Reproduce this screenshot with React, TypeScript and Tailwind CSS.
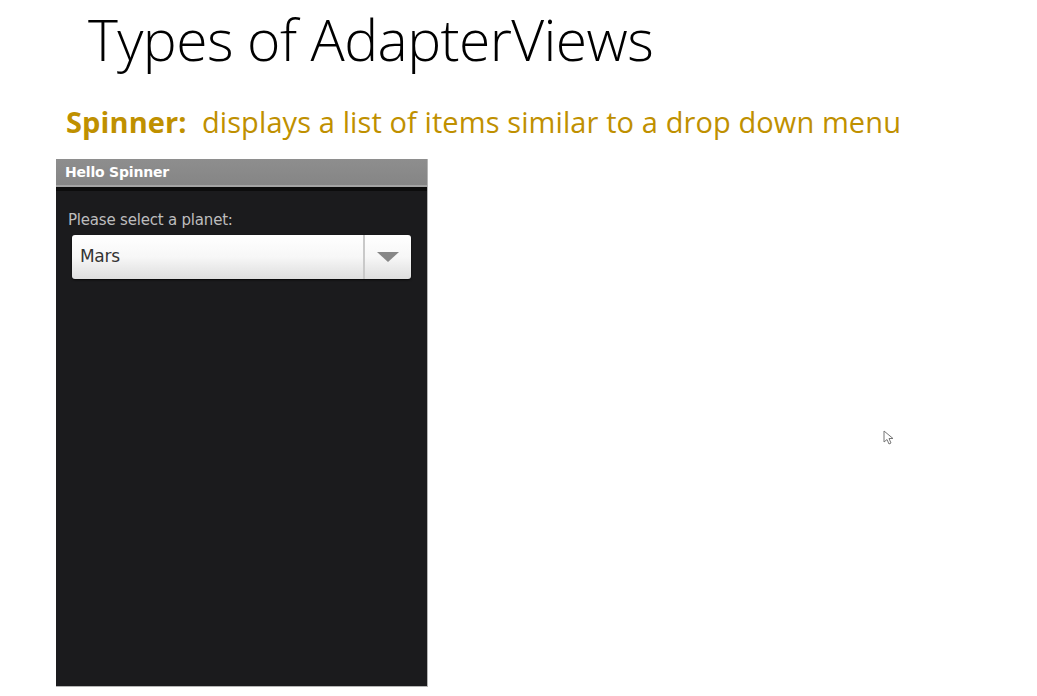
import React from 'react';

const Spinner: React.FC = () => (
  <div className="w-[372px] h-[528px] bg-[#1b1b1d] border-r border-b border-[#b5b5b5] flex flex-col">
    <div className="h-[28px] bg-gradient-to-b from-[#8e8e8e] to-[#858585] border-b-2 border-[#a3a3a3] flex items-center px-[9px]">
      <span className="text-white text-[14px] font-bold tracking-[-0.2px]" style={{ fontFamily: '"DejaVu Sans", sans-serif' }}>
        Hello Spinner
      </span>
    </div>
    <div className="h-[4px] bg-[#0c0c0c]" />
    <div className="px-[12px] pt-[21px]" style={{ fontFamily: '"DejaVu Sans", sans-serif' }}>
      <p className="text-[#bdbdbd] text-[15px] leading-[16px] tracking-[-0.2px]">Please select a planet:</p>
      <div className="mt-[7px] mx-[4px] h-[44px] rounded-[3px] bg-gradient-to-b from-[#ffffff] via-[#f7f7f7] to-[#dedede] flex shadow-[0_1px_2px_rgba(0,0,0,0.8)]">
        <div className="flex-1 flex items-center pl-[8px] border-r-2 border-[#c9c9c9]">
          <span className="text-[#333333] text-[17px] tracking-[-0.3px]">Mars</span>
        </div>
        <div className="w-[46px] flex items-center justify-center">
          <svg width="24" height="12" viewBox="0 0 24 12">
            <path d="M1 1 L23 1 L12 11 Z" fill="#878787" />
          </svg>
        </div>
      </div>
    </div>
  </div>
);

export default function App() {
  return (
    <div className="w-[1037px] h-[696px] bg-white overflow-hidden relative">
      <h1
        className="pl-[88px] pt-[4px] text-[57px] leading-[70px] font-light text-black tracking-[-0.6px]"
        style={{ fontFamily: '"Open Sans", sans-serif' }}
      >
        Types of AdapterViews
      </h1>
      <p
        className="pl-[66px] mt-[30px] text-[29px] leading-[36px] text-[#bf9000] tracking-[0.1px]"
        style={{ fontFamily: '"Open Sans", sans-serif' }}
      >
        <span className="font-bold">Spinner:</span>&nbsp; displays a list of items similar to a drop down menu
      </p>
      <div className="pl-[56px] mt-[19px]">
        <Spinner />
      </div>
      <svg className="absolute left-[883px] top-[430px]" width="12" height="16" viewBox="0 0 12 16">
        <path d="M1 1 L1 12 L4 9.5 L6 14 L8 13 L6 8.5 L10 8.5 Z" fill="white" stroke="#777" strokeWidth="1" />
      </svg>
    </div>
  );
}
